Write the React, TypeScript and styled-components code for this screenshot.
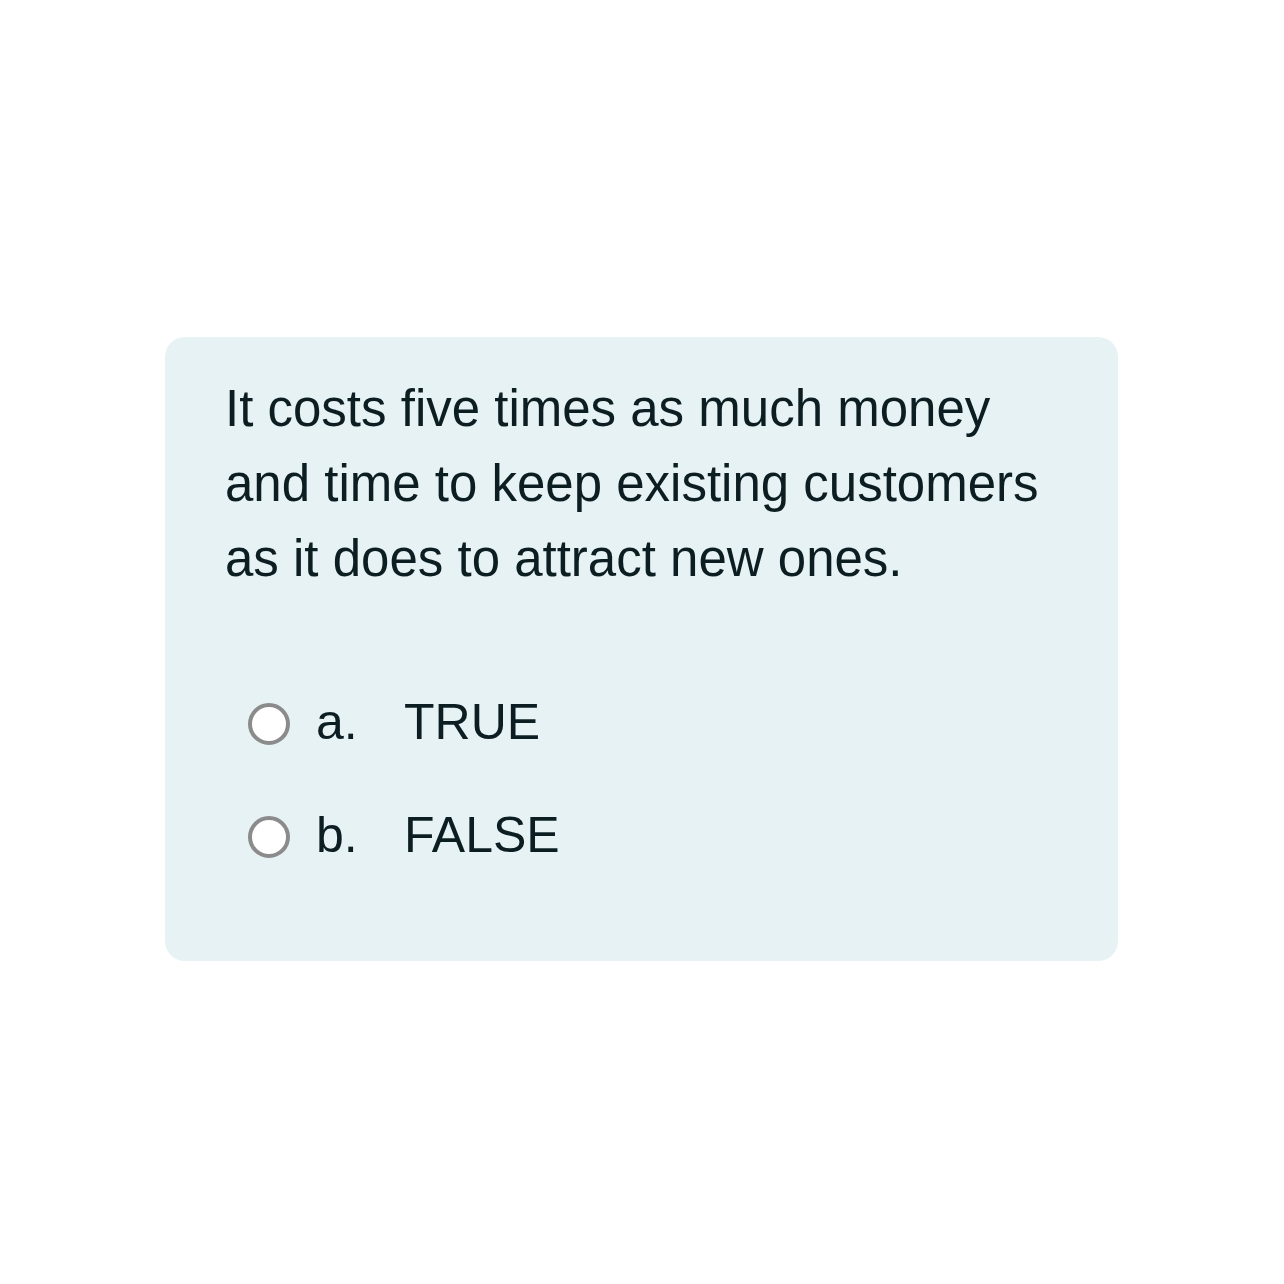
import React from "react";
import styled, { createGlobalStyle } from "styled-components";

const Global = createGlobalStyle`
  html, body { margin: 0; padding: 0; background: #ffffff; }
  body { font-family: "Liberation Sans", Arial, sans-serif; }
`;

const Page = styled.div`
  width: 1284px;
  height: 1284px;
  display: flex;
  justify-content: flex-start;
  align-items: flex-start;
  padding: 337px 0 0 165px;
  box-sizing: border-box;
`;

const Card = styled.div`
  width: 953px;
  height: 624px;
  box-sizing: border-box;
  background: #e7f2f4;
  border-radius: 20px;
  padding: 34px 60px 0 60px;
  display: flex;
  flex-direction: column;
  color: #0c1e22;
`;

const Question = styled.p`
  margin: 0;
  font-size: 51px;
  line-height: 75px;
  width: 833px;
`;

const Options = styled.div`
  margin-top: 89px;
  display: flex;
  flex-direction: column;
  gap: 38px;
`;

const Option = styled.label`
  display: flex;
  align-items: center;
  height: 75px;
  font-size: 50px;
  line-height: 75px;
  padding-left: 23px;
`;

const Radio = styled.span`
  width: 42px;
  height: 42px;
  box-sizing: border-box;
  border-radius: 50%;
  border: 4px solid #8b8b8b;
  background: #ffffff;
  flex-shrink: 0;
  margin-top: 2px;
  margin-right: 26px;
`;

const Letter = styled.span`
  width: 88px;
  flex-shrink: 0;
`;

const Answer = styled.span``;

const options = [
  { letter: "a.", text: "TRUE" },
  { letter: "b.", text: "FALSE" },
];

export default function App() {
  return (
    <>
      <Global />
      <Page>
        <Card>
          <Question>
            It costs five times as much money and time to keep existing customers as it does to attract new ones.
          </Question>
          <Options>
            {options.map((o) => (
              <Option key={o.letter}>
                <Radio />
                <Letter>{o.letter}</Letter>
                <Answer>{o.text}</Answer>
              </Option>
            ))}
          </Options>
        </Card>
      </Page>
    </>
  );
}
